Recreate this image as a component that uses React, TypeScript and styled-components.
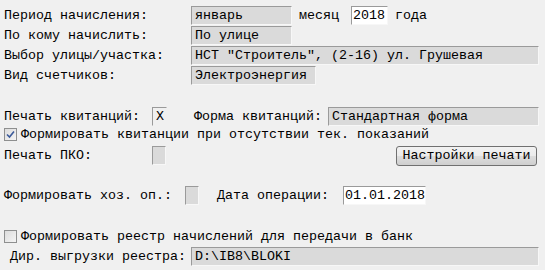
import React from "react";
import styled, { createGlobalStyle } from "styled-components";

const Global = createGlobalStyle`
  html, body { margin: 0; padding: 0; background: #f0f0f0; }
  body { font-family: "Liberation Mono", "Courier New", monospace; font-size: 13.333px; color: #000; }
`;

const Page = styled.div`
  width: 545px;
  height: 270px;
  box-sizing: border-box;
  padding: 5px 8px 0 4px;
  display: flex;
  flex-direction: column;
`;

const Row = styled.div<{ $h?: number; $mt?: number; $ml?: number }>`
  display: flex;
  align-items: center;
  height: ${(p) => p.$h ?? 20}px;
  margin-top: ${(p) => p.$mt ?? 0}px;
  margin-left: ${(p) => p.$ml ?? 0}px;
  white-space: pre;
`;

const Label = styled.span<{ $w?: number; $ml?: number }>`
  display: inline-block;
  width: ${(p) => (p.$w ? `${p.$w}px` : "auto")};
  margin-left: ${(p) => p.$ml ?? 0}px;
  flex: none;
`;

const Field = styled.div<{ $w: number; $white?: boolean; $ml?: number; $flat?: boolean }>`
  box-sizing: border-box;
  width: ${(p) => p.$w}px;
  height: 19px;
  margin-left: ${(p) => p.$ml ?? 0}px;
  padding-left: ${(p) => (p.$white ? 1 : 3)}px;
  display: flex;
  align-items: center;
  flex: none;
  background: ${(p) => (p.$white ? "#ffffff" : p.$flat ? "#f0f0f0" : "#dadada")};
  border-top: 1px solid #9a9a9a;
  border-left: 1px solid #9a9a9a;
  border-right: 1px solid ${(p) => (p.$flat ? "#f0f0f0" : "#f7f7f7")};
  border-bottom: 1px solid ${(p) => (p.$flat ? "#f0f0f0" : "#f7f7f7")};
`;

const Box = styled.div`
  width: 13px;
  height: 13px;
  box-sizing: border-box;
  border: 1px solid #8e8f8f;
  background: linear-gradient(135deg, #dcdcdc 0%, #f4f4f4 100%);
  display: flex;
  align-items: center;
  justify-content: center;
  flex: none;
  margin-right: 4px;
`;

const Button = styled.button`
  margin-left: auto;
  width: 141px;
  height: 20px;
  box-sizing: border-box;
  border: 1px solid #707070;
  border-radius: 3px;
  background: linear-gradient(#f2f2f2 0%, #ebebeb 50%, #dddddd 51%, #cfcfcf 100%);
  font-family: "Liberation Mono", "Courier New", monospace;
  font-size: 13.333px;
  color: #000;
  padding: 0;
`;

const Check = ({ checked }: { checked?: boolean }) => (
  <Box>
    {checked && (
      <svg width="9" height="9" viewBox="0 0 9 9">
        <path d="M1 4.5 L3.5 7 L8 1.5" stroke="#3b5a9a" strokeWidth="1.6" fill="none" />
      </svg>
    )}
  </Box>
);

export default function App() {
  return (
    <>
      <Global />
      <Page>
        <Row>
          <Label $w={187}>Период начисления:</Label>
          <Field $w={101}>январь</Field>
          <Label $ml={7}>месяц</Label>
          <Field $w={37} $white $ml={12}>2018</Field>
          <Label $ml={7}>года</Label>
        </Row>
        <Row>
          <Label $w={187}>По кому начислить:</Label>
          <Field $w={101}>По улице</Field>
        </Row>
        <Row>
          <Label $w={187}>Выбор улицы/участка:</Label>
          <Field $w={348}>НСТ "Строитель", (2-16) ул. Грушевая</Field>
        </Row>
        <Row>
          <Label $w={187}>Вид счетчиков:</Label>
          <Field $w={125}>Электроэнергия</Field>
        </Row>

        <Row $mt={21}>
          <Label $w={148}>Печать квитанций:</Label>
          <Field $w={15} $flat>X</Field>
          <Label $ml={27}>Форма квитанций:</Label>
          <Field $w={211} $ml={6}>Стандартная форма</Field>
        </Row>
        <Row $h={16}>
          <Check checked />
          <Label>Формировать квитанции при отсутствии тек. показаний</Label>
        </Row>
        <Row $h={21} $mt={3}>
          <Label $w={148}>Печать ПКО:</Label>
          <Field $w={14} />
          <Button>Настройки печати</Button>
        </Row>

        <Row $h={21} $mt={19}>
          <Label $w={181}>Формировать хоз. оп.:</Label>
          <Field $w={14} />
          <Label $ml={18}>Дата операции:</Label>
          <Field $w={83} $white $ml={14}>01.01.2018</Field>
        </Row>

        <Row $h={16} $mt={22}>
          <Check />
          <Label>Формировать реестр начислений для передачи в банк</Label>
        </Row>
        <Row $h={21} $mt={2}>
          <Label $w={181} $ml={6}>Дир. выгрузки реестра:</Label>
          <Field $w={348}>D:\IB8\BLOKI</Field>
        </Row>
      </Page>
    </>
  );
}
